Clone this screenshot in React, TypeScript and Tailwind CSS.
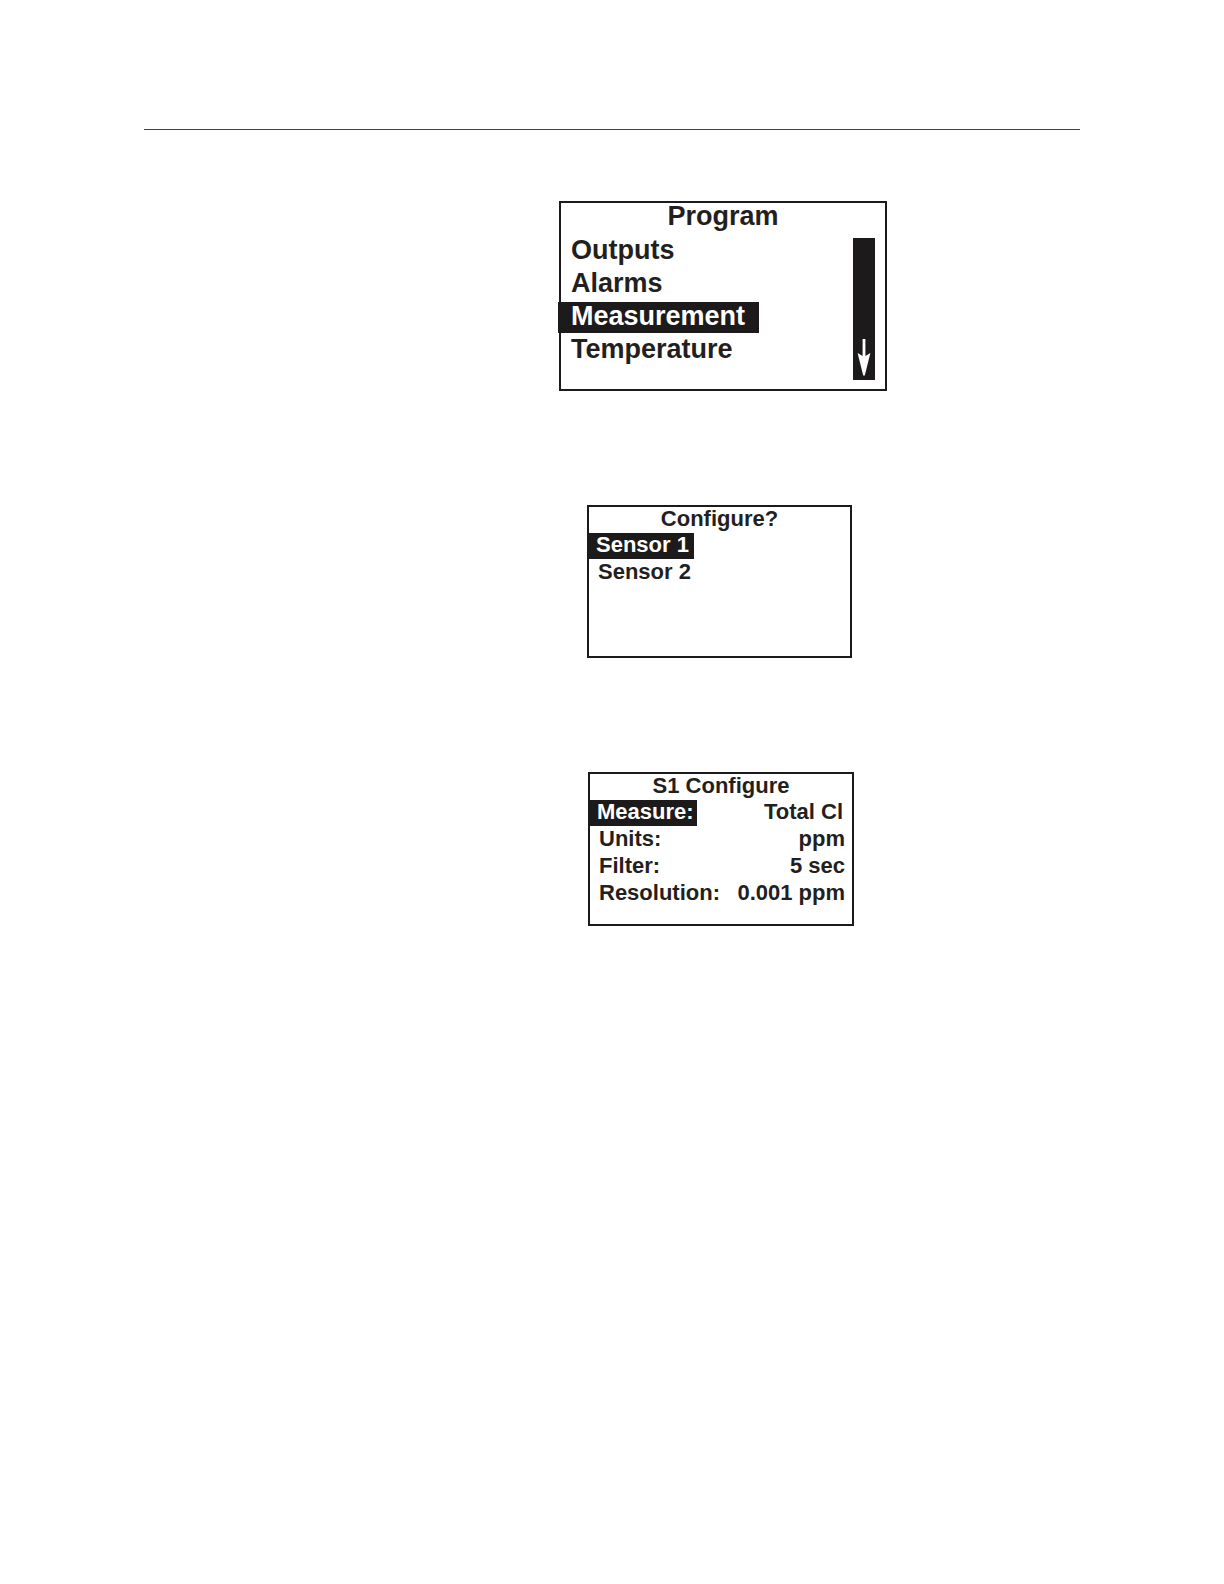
import clsx from "clsx";

const programItems = ["Outputs", "Alarms", "Measurement", "Temperature"];
const sensorItems = ["Sensor 1", "Sensor 2"];

const settings = [
  { label: "Measure:", value: "Total Cl" },
  { label: "Units:", value: "ppm" },
  { label: "Filter:", value: "5 sec" },
  { label: "Resolution:", value: "0.001 ppm" },
];

const ProgramScreen = () => {
  return (
    <section className="flex flex-col w-full max-w-[328px] min-h-[190px] border-2 border-[#1c1a1b] text-[27px]">
      <h2 className="text-center leading-[26px]">Program</h2>
      <div className="flex flex-1 justify-between">
        <ul className="flex flex-col items-start gap-[2px] mt-[7px] -ml-[3px]">
          {programItems.map((item) => (
            <li key={item} className="flex">
              <button
                className={clsx(
                  "pl-[13px] pr-[14px] pb-[2px] leading-[29px] text-left",
                  item === "Measurement" && "bg-[#1c1a1b] text-white"
                )}
              >
                {item}
              </button>
            </li>
          ))}
        </ul>
        {/* SCROLL BAR */}
        <div className="flex items-end justify-center w-[22px] mt-[9px] mb-[9px] mr-[10px] pb-1 bg-[#1c1a1b]">
          <svg width="14" height="38" viewBox="0 0 14 38" fill="white" aria-hidden="true">
            <path d="M5.6 1H8.4V18L13.4 15L7.8 37.5H6.2L0.6 15L5.6 18Z" />
          </svg>
        </div>
      </div>
    </section>
  );
};

const SensorScreen = () => {
  return (
    <section className="w-full max-w-[265px] min-h-[153px] ml-7 border-2 border-[#1c1a1b] text-[22px]">
      <h2 className="text-center leading-[24px]">Configure?</h2>
      <ul className="flex flex-col items-start gap-px mt-[2px]">
        {sensorItems.map((item, i) => (
          <li key={item} className="flex">
            <button
              className={clsx(
                "pr-[5px] pb-[2px] leading-[24px] text-left",
                i === 0 ? "pl-[7px] bg-[#1c1a1b] text-white" : "pl-[9px]"
              )}
            >
              {item}
            </button>
          </li>
        ))}
      </ul>
    </section>
  );
};

const SettingsScreen = () => {
  return (
    <section className="w-full max-w-[266px] min-h-[154px] ml-[29px] border-2 border-[#1c1a1b] text-[22px]">
      <h2 className="text-center leading-[24px]">S1 Configure</h2>
      <ul className="flex flex-col gap-px mt-[2px]">
        {settings.map(({ label, value }, i) => (
          <li key={label}>
            <button
              className={clsx(
                "flex justify-between w-full leading-[24px] whitespace-nowrap",
                i === 0 ? "pr-[9px]" : "pr-[7px]"
              )}
            >
              <span
                className={clsx(
                  "pb-[2px]",
                  i === 0 ? "pl-[7px] pr-[3px] bg-[#1c1a1b] text-white" : "pl-[9px]"
                )}
              >
                {label}
              </span>
              <span>{value}</span>
            </button>
          </li>
        ))}
      </ul>
    </section>
  );
};

const App = () => {
  return (
    <div className="min-h-screen bg-white px-36 pt-32 font-['Liberation_Sans',Arial,sans-serif] font-bold text-[#231f20]">
      <header className="mt-px border-t border-[#144a7c]" />
      <main className="flex flex-col items-start gap-[114px] pt-[71px] pl-[415px]">
        <ProgramScreen />
        <SensorScreen />
        <SettingsScreen />
      </main>
    </div>
  );
};

export default App;
